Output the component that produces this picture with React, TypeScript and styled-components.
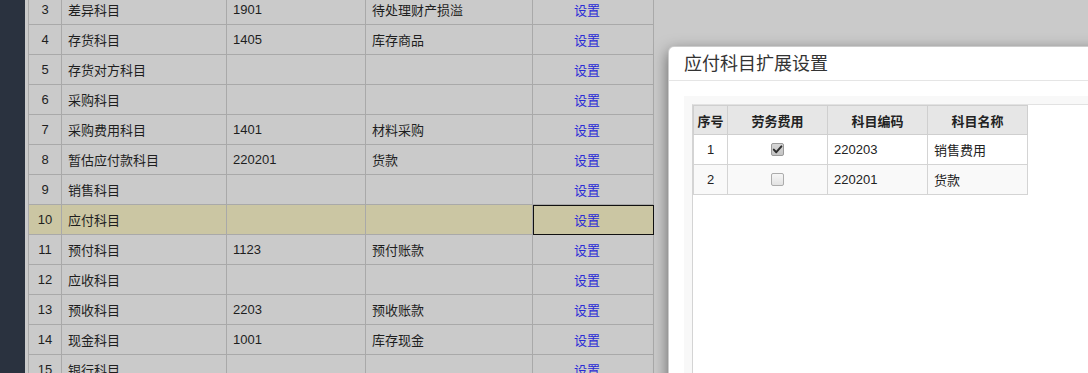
import React from "react";
import styled, { createGlobalStyle } from "styled-components";

const GlobalStyle = createGlobalStyle`
  html, body {
    margin: 0;
    padding: 0;
    overflow: hidden;
  }
  body {
    font-family: "Liberation Sans", "Noto Sans CJK SC", sans-serif;
    font-size: 13px;
    color: #222;
  }
`;

interface SubjectRow {
  no: number;
  name: string;
  code: string;
  account: string;
}

const subjects: SubjectRow[] = [
  { no: 3, name: "差异科目", code: "1901", account: "待处理财产损溢" },
  { no: 4, name: "存货科目", code: "1405", account: "库存商品" },
  { no: 5, name: "存货对方科目", code: "", account: "" },
  { no: 6, name: "采购科目", code: "", account: "" },
  { no: 7, name: "采购费用科目", code: "1401", account: "材料采购" },
  { no: 8, name: "暂估应付款科目", code: "220201", account: "货款" },
  { no: 9, name: "销售科目", code: "", account: "" },
  { no: 10, name: "应付科目", code: "", account: "" },
  { no: 11, name: "预付科目", code: "1123", account: "预付账款" },
  { no: 12, name: "应收科目", code: "", account: "" },
  { no: 13, name: "预收科目", code: "2203", account: "预收账款" },
  { no: 14, name: "现金科目", code: "1001", account: "库存现金" },
  { no: 15, name: "银行科目", code: "", account: "" },
];

const extRows = [
  { no: 1, labor: true, code: "220203", name: "销售费用" },
  { no: 2, labor: false, code: "220201", name: "货款" },
];

const SELECTED = 10;

export default function App() {
  return (
    <>
      <GlobalStyle />
      <Page>
        <Sidebar />
        <Main>
          <GridTable>
            <colgroup>
              <Col $w={33} />
              <Col $w={165} />
              <Col $w={139} />
              <Col $w={167} />
              <Col $w={121} />
            </colgroup>
            <tbody>
              {subjects.map((r) => (
                <GridRow key={r.no} $selected={r.no === SELECTED}>
                  <NoCell>{r.no}</NoCell>
                  <Cell>{r.name}</Cell>
                  <Cell>{r.code}</Cell>
                  <Cell>{r.account}</Cell>
                  <ActionCell $active={r.no === SELECTED}>
                    <SetLink>设置</SetLink>
                  </ActionCell>
                </GridRow>
              ))}
            </tbody>
          </GridTable>
        </Main>

        <Modal>
          <ModalHeader>
            <ModalTitle>应付科目扩展设置</ModalTitle>
          </ModalHeader>
          <ModalBody>
            <Well>
              <Panel>
                <SubTable>
                  <colgroup>
                    <Col $w={34} />
                    <Col $w={100} />
                    <Col $w={100} />
                    <Col $w={100} />
                  </colgroup>
                  <thead>
                    <tr>
                      <HeadCell>序号</HeadCell>
                      <HeadCell>劳务费用</HeadCell>
                      <HeadCell>科目编码</HeadCell>
                      <HeadCell>科目名称</HeadCell>
                    </tr>
                  </thead>
                  <tbody>
                    {extRows.map((r, i) => (
                      <SubRow key={r.no} $striped={i % 2 === 1}>
                        <SubCell $center>{r.no}</SubCell>
                        <SubCell $center>
                          <CheckBox $checked={r.labor}>
                            {r.labor && (
                              <svg width="11" height="11" viewBox="0 0 11 11">
                                <path
                                  d="M1.8 5.6 L4.3 8.2 L9.4 2.4"
                                  fill="none"
                                  stroke="#2e2e2e"
                                  strokeWidth="2"
                                  strokeLinecap="round"
                                  strokeLinejoin="round"
                                />
                              </svg>
                            )}
                          </CheckBox>
                        </SubCell>
                        <SubCell>{r.code}</SubCell>
                        <SubCell>{r.name}</SubCell>
                      </SubRow>
                    ))}
                  </tbody>
                </SubTable>
              </Panel>
            </Well>
          </ModalBody>
        </Modal>
      </Page>
    </>
  );
}

const Page = styled.div`
  position: relative;
  display: flex;
  width: 1088px;
  height: 373px;
  background-color: #cacaca;
  overflow: hidden;
`;

const Sidebar = styled.div`
  flex: 0 0 25px;
  background-color: #2a323f;
`;

const Main = styled.div`
  flex: 1;
  padding-left: 3px;
  margin-top: -6px;
`;

const GridTable = styled.table`
  width: 626px;
  table-layout: fixed;
  border-collapse: collapse;
`;

const Col = styled.col<{ $w: number }>`
  width: ${(p) => p.$w}px;
`;

const GridRow = styled.tr<{ $selected?: boolean }>`
  height: 30px;
  background-color: ${(p) => (p.$selected ? "#cbc6a3" : "#cacaca")};
`;

const Cell = styled.td`
  border: 1px solid #a9a9a9;
  padding: 0 6px;
  white-space: nowrap;
  overflow: hidden;
  color: #1e1e1e;
`;

const NoCell = styled(Cell)`
  text-align: center;
  padding: 0;
`;

const ActionCell = styled(Cell)<{ $active?: boolean }>`
  text-align: center;
  padding: 0 12px 0 0;
  outline: ${(p) => (p.$active ? "1px solid #111" : "none")};
  outline-offset: -1px;
`;

const SetLink = styled.a`
  color: #2b2bd6;
  cursor: pointer;
`;

const Modal = styled.div`
  position: absolute;
  left: 668px;
  top: 46px;
  width: 460px;
  height: 360px;
  background-color: #fff;
  border: 1px solid rgba(0, 0, 0, 0.2);
  border-radius: 6px;
  box-shadow: 0 5px 15px rgba(0, 0, 0, 0.5);
`;

const ModalHeader = styled.div`
  padding: 7px 15px 5px;
  border-bottom: 1px solid #e5e5e5;
`;

const ModalTitle = styled.h4`
  margin: 0;
  font-size: 18px;
  font-weight: normal;
  line-height: 21px;
  color: #333;
`;

const ModalBody = styled.div`
  padding: 15px 0 0 15px;
`;

const Well = styled.div`
  background-color: #f8f8f8;
  padding: 8px 0 0 8px;
  height: 300px;
`;

const Panel = styled.div`
  background-color: #fff;
  border-left: 1px solid #d4d4d4;
  border-top: 1px solid #e2e2e2;
  height: 300px;
`;

const SubTable = styled.table`
  width: 335px;
  table-layout: fixed;
  border-collapse: collapse;
  border: 1px solid #cfcfcf;
`;

const HeadCell = styled.th`
  height: 28px;
  padding: 0;
  background-color: #e6e6e6;
  border: 1px solid #cfcfcf;
  font-weight: bold;
  text-align: center;
  color: #222;
`;

const SubRow = styled.tr<{ $striped?: boolean }>`
  height: 30px;
  background-color: ${(p) => (p.$striped ? "#f9f9f9" : "#fff")};
`;

const SubCell = styled.td<{ $center?: boolean }>`
  border: 1px solid #d4d4d4;
  padding: 0 6px;
  text-align: ${(p) => (p.$center ? "center" : "left")};
  color: #222;
`;

const CheckBox = styled.span<{ $checked?: boolean }>`
  display: inline-flex;
  align-items: center;
  justify-content: center;
  width: 11px;
  height: 11px;
  vertical-align: middle;
  margin-top: -2px;
  border: 1px solid ${(p) => (p.$checked ? "#9a9a9a" : "#acacac")};
  border-radius: 2px;
  background: ${(p) =>
    p.$checked
      ? "linear-gradient(#d6d6d6, #c4c4c4)"
      : "linear-gradient(#f6f6f6, #e2e2e2)"};
`;
